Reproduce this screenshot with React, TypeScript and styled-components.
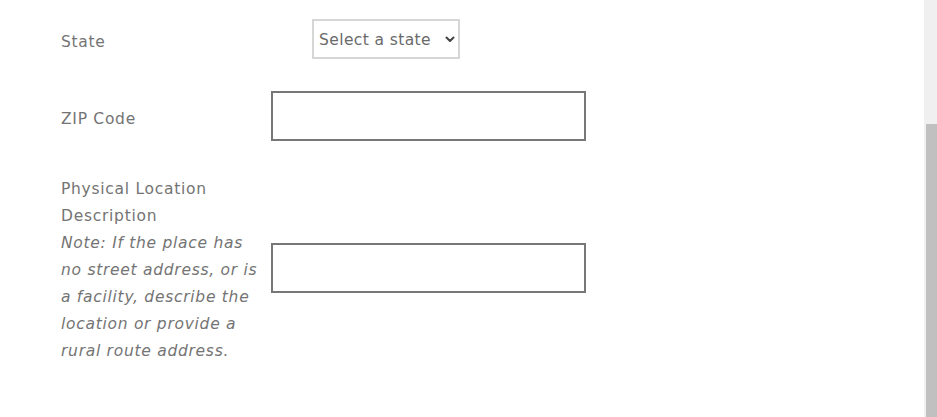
import React from "react";
import styled, { createGlobalStyle } from "styled-components";

const FONT = `"DejaVu Sans", "Open Sans", sans-serif`;

const Global = createGlobalStyle`
  html, body { margin: 0; padding: 0; background: #fff; }
  body { font-family: ${FONT}; overflow: hidden; }
`;

const Page = styled.div`
  display: flex;
  width: 937px;
  height: 417px;
  overflow: hidden;
`;

const Content = styled.div`
  flex: 1;
  padding: 3px 0 0 61px;
`;

const Row = styled.div`
  display: flex;
  align-items: center;
  padding: 16px 0;
`;

const Label = styled.div`
  flex: 0 0 200px;
  margin-right: 10px;
  padding-top: 3px;
  margin-bottom: -3px;
  font-size: 15.5px;
  line-height: 27px;
  letter-spacing: 0.72px;
  color: #747474;
  font-weight: 400;
`;

const Note = styled.em`
  display: block;
  font-style: italic;
`;

const SelectWrap = styled.div`
  position: relative;
  margin-left: 41px;
  display: flex;
`;

const Select = styled.select`
  appearance: none;
  -webkit-appearance: none;
  box-sizing: border-box;
  width: 148px;
  height: 40px;
  border: 2px solid #d6d6d6;
  border-radius: 0;
  background: #fff;
  font-family: ${FONT};
  font-size: 15.5px;
  letter-spacing: 0.4px;
  color: #6a6a6a;
  padding: 2px 0 0 5px;
  outline: none;
`;

const Chevron = styled.svg`
  position: absolute;
  right: 5px;
  top: 17px;
  width: 10px;
  height: 7px;
  pointer-events: none;
`;

const Input = styled.input`
  box-sizing: border-box;
  width: 315px;
  height: 50px;
  border: 2px solid #777;
  background: #fff;
  outline: none;
`;

const Scrollbar = styled.div`
  width: 13px;
  background: #f0f0f0;
  display: flex;
  flex-direction: column;
  align-items: flex-end;
`;

const Thumb = styled.div`
  margin-top: 124px;
  width: 11px;
  flex: 1;
  background: #c0c0c0;
`;

export default function App() {
  return (
    <>
      <Global />
      <Page>
        <Content>
          <Row>
            <Label>State</Label>
            <SelectWrap>
              <Select defaultValue="">
                <option value="">Select a state</option>
              </Select>
              <Chevron viewBox="0 0 10 7">
                <path
                  d="M1.5 1.5 L5 5 L8.5 1.5"
                  fill="none"
                  stroke="#444"
                  strokeWidth="2"
                  strokeLinecap="round"
                  strokeLinejoin="round"
                />
              </Chevron>
            </SelectWrap>
          </Row>
          <Row>
            <Label>ZIP Code</Label>
            <Input type="text" />
          </Row>
          <Row>
            <Label>
              Physical Location Description
              <Note>
                Note: If the place has no street address, or is a facility,
                describe the location or provide a rural route address.
              </Note>
            </Label>
            <Input type="text" />
          </Row>
        </Content>
        <Scrollbar>
          <Thumb />
        </Scrollbar>
      </Page>
    </>
  );
}
